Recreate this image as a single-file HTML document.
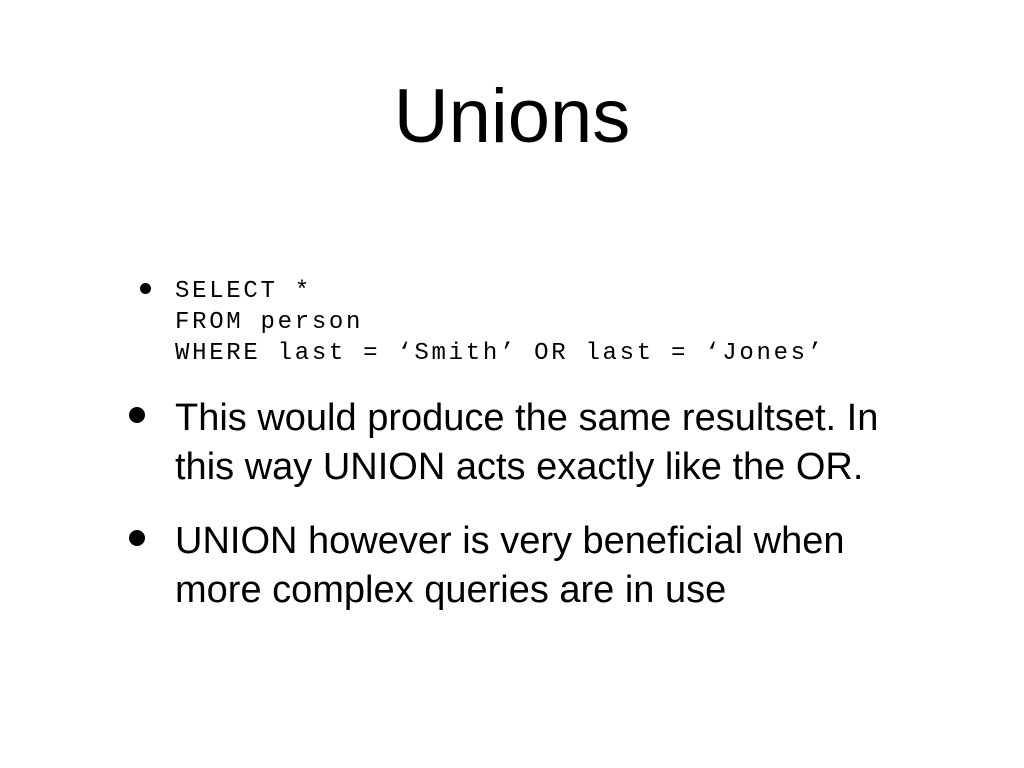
<!DOCTYPE html>
<html><head><meta charset="utf-8"><style>
body{margin:0;width:1024px;height:768px;background:#fff;position:relative;overflow:hidden;font-family:"Liberation Sans",sans-serif;color:#000}
.a{position:absolute;white-space:nowrap;line-height:1}
.t{font-size:76px;left:0;width:1024px;text-align:center;top:79px}
.c{font-family:"Liberation Mono",monospace;font-size:24px;letter-spacing:2.7px;left:175px}
.b{font-size:38px;left:175px;letter-spacing:0}
.d{position:absolute;border-radius:50%;background:#000}
</style></head><body>
<div class="a t">Unions</div>
<div class="d" style="left:140px;top:283px;width:11px;height:11px"></div>
<div class="a c" style="top:280px">SELECT *</div>
<div class="a c" style="top:311px">FROM person</div>
<div class="a c" style="top:342px">WHERE last = ‘Smith’ OR last = ‘Jones’</div>
<div class="d" style="left:129px;top:407px;width:16px;height:16px"></div>
<div class="a b" style="top:399px">This would produce the same resultset. In</div>
<div class="a b" style="top:448px">this way UNION acts exactly like the OR.</div>
<div class="d" style="left:129px;top:530px;width:16px;height:16px"></div>
<div class="a b" style="top:522px">UNION however is very beneficial when</div>
<div class="a b" style="top:571px">more complex queries are in use</div>
</body></html>
